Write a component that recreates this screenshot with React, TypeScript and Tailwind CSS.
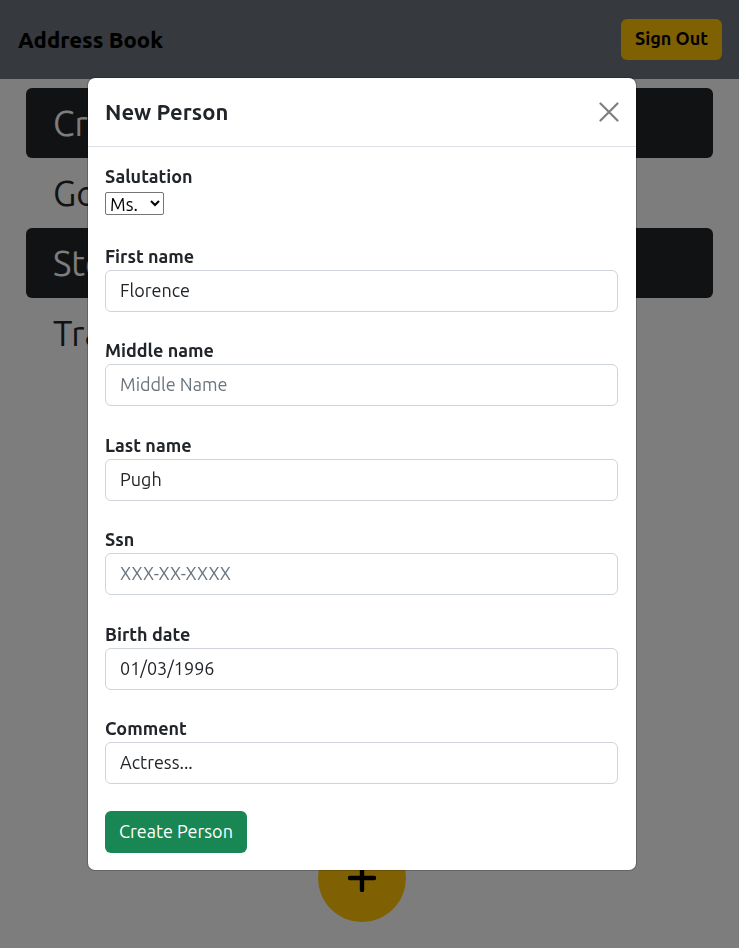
import { useState } from "react";

type Field = {
  id: string;
  label: string;
  placeholder: string;
  initial: string;
};

const fields: Field[] = [
  { id: "first-name", label: "First name", placeholder: "First Name", initial: "Florence" },
  { id: "middle-name", label: "Middle name", placeholder: "Middle Name", initial: "" },
  { id: "last-name", label: "Last name", placeholder: "Last Name", initial: "Pugh" },
  { id: "ssn", label: "Ssn", placeholder: "XXX-XX-XXXX", initial: "" },
  { id: "birth-date", label: "Birth date", placeholder: "MM/DD/YYYY", initial: "01/03/1996" },
  { id: "comment", label: "Comment", placeholder: "Comment", initial: "Actress..." },
];

const people = ["Cr", "Go", "Ste", "Tra"];

function AddressBook() {
  return (
    <div className="flex min-h-screen flex-col bg-[#f8fbf9]">
      <header className="flex h-[79px] items-center justify-between bg-[#6c737c] pr-[17px] pl-[18px]">
        <h1 className="text-[22px] font-extrabold text-black">Address Book</h1>
        <button
          type="button"
          className="h-[41px] rounded-md bg-[#ffc107] px-[14px] pb-[3px] text-[18px] leading-[26px] font-bold text-black"
        >
          Sign Out
        </button>
      </header>
      <ul className="mx-[26px] mt-[9px] flex grow flex-col">
        {people.map((name) => (
          <li
            key={name}
            className="flex h-[70px] items-center rounded-md px-[27px] text-[35px] font-[450] text-[#212529] odd:bg-[#212529] odd:text-[#f8fbf9]"
          >
            {name}
          </li>
        ))}
      </ul>
      <div className="flex justify-center pr-[15px] pb-[26px]">
        <button
          type="button"
          aria-label="Add person"
          className="flex size-[88px] items-center justify-center rounded-full bg-[#ffc107] text-black"
        >
          <svg viewBox="0 0 28 28" className="size-7" stroke="currentColor" strokeWidth="4.400" strokeLinecap="round">
            <path d="M14 2v24M2 14h24" />
          </svg>
        </button>
      </div>
    </div>
  );
}

function NewPersonDialog() {
  const [salutation, setSalutation] = useState("Ms.");
  const [values, setValues] = useState<Record<string, string>>(
    Object.fromEntries(fields.map((f) => [f.id, f.initial])),
  );

  return (
    <div
      role="dialog"
      aria-modal="true"
      aria-labelledby="dialog-title"
      className="w-full max-w-[550px] rounded-lg border border-black/20 bg-white bg-clip-padding text-[#212529]"
    >
      <div className="flex h-[69px] items-center justify-between border-b border-[#dee2e6] px-[17px]">
        <h2 id="dialog-title" className="pb-[2px] text-[22px] font-semibold">
          New Person
        </h2>
        <button type="button" aria-label="Close" className="text-[#7f7f7f]">
          <svg viewBox="0 0 20 20" className="size-5" stroke="currentColor" strokeWidth="2.200" strokeLinecap="round">
            <path d="M1.500 1.500l17 17M18.500 1.500l-17 17" />
          </svg>
        </button>
      </div>
      <form
        onSubmit={(e) => e.preventDefault()}
        className="my-[17px] mr-[18px] ml-[17px] flex min-h-[689px] flex-col items-start justify-between text-[18px]"
      >
        <div className="flex flex-col items-start pb-[2px]">
          <label htmlFor="salutation" className="pb-[4px] font-bold leading-[24px]">
            Salutation
          </label>
          <select
            id="salutation"
            value={salutation}
            onChange={(e) => setSalutation(e.target.value)}
            className="h-[23px] w-[59px] rounded-[2px] border border-[#767676] bg-white pb-[2px] text-black"
          >
            <option>Mr.</option>
            <option>Ms.</option>
            <option>Dr.</option>
          </select>
        </div>
        {fields.map((f) => (
          <div key={f.id} className="flex w-full flex-col">
            <label htmlFor={f.id} className="pb-[2px] font-bold leading-[24px]">
              {f.label}
            </label>
            <input
              id={f.id}
              type="text"
              placeholder={f.placeholder}
              value={values[f.id]}
              onChange={(e) => setValues({ ...values, [f.id]: e.target.value })}
              className="h-[42px] w-full rounded-md border border-[#ced4da] bg-white px-[14px] pb-[2px] placeholder:text-[#6c757d]"
            />
          </div>
        ))}
        <button type="submit" className="h-[42px] rounded-md bg-[#198754] px-[14px] text-white">
          Create Person
        </button>
      </form>
    </div>
  );
}

export default function App() {
  return (
    <div className="font-[Ubuntu,'Noto_Sans',sans-serif]">
      <AddressBook />
      <div className="fixed inset-0 flex items-center justify-center bg-black/50 pr-[15px]">
        <NewPersonDialog />
      </div>
    </div>
  );
}
